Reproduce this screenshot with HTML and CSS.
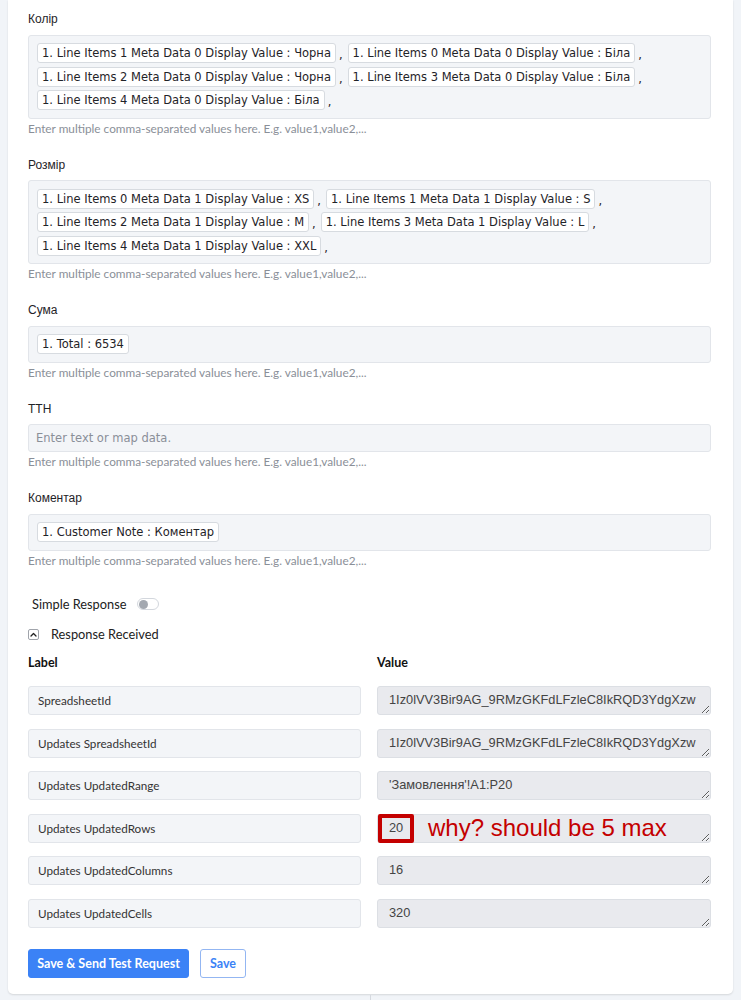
FILE: index.html
```html
<!DOCTYPE html>
<html lang="uk">
<head>
<meta charset="utf-8">
<title>Response Received</title>
<link rel="stylesheet" href="styles.css">
</head>
<body>
<div class="page">
  <div class="card">
    <div class="field">
      <div class="label">Колір</div>
      <div class="chips">
        <span class="chip-item"><span class="chip">1. Line Items 1 Meta Data 0 Display Value : Чорна</span><span class="comma">,</span></span>
        <span class="chip-item"><span class="chip">1. Line Items 0 Meta Data 0 Display Value : Біла</span><span class="comma">,</span></span>
        <span class="chip-item"><span class="chip">1. Line Items 2 Meta Data 0 Display Value : Чорна</span><span class="comma">,</span></span>
        <span class="chip-item"><span class="chip">1. Line Items 3 Meta Data 0 Display Value : Біла</span><span class="comma">,</span></span>
        <span class="chip-item"><span class="chip">1. Line Items 4 Meta Data 0 Display Value : Біла</span><span class="comma">,</span></span>
      </div>
      <div class="hint">Enter multiple comma-separated values here. E.g. value1,value2,...</div>
    </div>

    <div class="field">
      <div class="label">Розмір</div>
      <div class="chips">
        <span class="chip-item"><span class="chip">1. Line Items 0 Meta Data 1 Display Value : XS</span><span class="comma">,</span></span>
        <span class="chip-item"><span class="chip">1. Line Items 1 Meta Data 1 Display Value : S</span><span class="comma">,</span></span>
        <span class="chip-item"><span class="chip">1. Line Items 2 Meta Data 1 Display Value : M</span><span class="comma">,</span></span>
        <span class="chip-item"><span class="chip">1. Line Items 3 Meta Data 1 Display Value : L</span><span class="comma">,</span></span>
        <span class="chip-item"><span class="chip">1. Line Items 4 Meta Data 1 Display Value : XXL</span><span class="comma">,</span></span>
      </div>
      <div class="hint">Enter multiple comma-separated values here. E.g. value1,value2,...</div>
    </div>

    <div class="field">
      <div class="label">Сума</div>
      <div class="chips">
        <span class="chip-item"><span class="chip">1. Total : 6534</span></span>
      </div>
      <div class="hint">Enter multiple comma-separated values here. E.g. value1,value2,...</div>
    </div>

    <div class="field">
      <div class="label">TTH</div>
      <div class="text-input">Enter text or map data.</div>
      <div class="hint">Enter multiple comma-separated values here. E.g. value1,value2,...</div>
    </div>

    <div class="field">
      <div class="label">Коментар</div>
      <div class="chips">
        <span class="chip-item"><span class="chip">1. Customer Note : Коментар</span></span>
      </div>
      <div class="hint">Enter multiple comma-separated values here. E.g. value1,value2,...</div>
    </div>

    <div class="simple-row">
      <span>Simple Response</span>
      <span class="toggle"><span class="knob"></span></span>
    </div>

    <div class="received-row">
      <span class="chev-box">
        <svg width="7" height="5" viewBox="0 0 7 5"><path d="M1 4 L3.5 1.5 L6 4" fill="none" stroke="#222" stroke-width="1.3" stroke-linecap="round" stroke-linejoin="round"/></svg>
      </span>
      <span>Response Received</span>
    </div>

    <div class="resp-grid">
      <div class="col-head">Label</div>
      <div class="col-head">Value</div>

      <div class="resp-label">SpreadsheetId</div>
      <textarea class="resp-value" wrap="off" disabled>1Iz0lVV3Bir9AG_9RMzGKFdLFzleC8IkRQD3YdgXzw</textarea>

      <div class="resp-label">Updates SpreadsheetId</div>
      <textarea class="resp-value" wrap="off" disabled>1Iz0lVV3Bir9AG_9RMzGKFdLFzleC8IkRQD3YdgXzw</textarea>

      <div class="resp-label">Updates UpdatedRange</div>
      <textarea class="resp-value" wrap="off" disabled>'Замовлення'!A1:P20</textarea>

      <div class="resp-label">Updates UpdatedRows</div>
      <div class="value-wrap">
        <textarea class="resp-value" wrap="off" disabled>20</textarea>
        <span class="mark-box"></span>
        <span class="mark-text">why? should be 5 max</span>
      </div>

      <div class="resp-label">Updates UpdatedColumns</div>
      <textarea class="resp-value" wrap="off" disabled>16</textarea>

      <div class="resp-label">Updates UpdatedCells</div>
      <textarea class="resp-value" wrap="off" disabled>320</textarea>
    </div>

    <div class="actions">
      <button class="btn btn-primary">Save &amp; Send Test Request</button>
      <button class="btn btn-outline">Save</button>
    </div>
  </div>
  <div class="below"><div></div><div class="below-right"></div></div>
</div>
</body>
</html>
```

FILE: styles.css
```css
html, body {
  margin: 0;
  padding: 0;
  background: #f1f4f8;
}

.page {
  width: 741px;
  height: 1000px;
  overflow: hidden;
}

.card {
  margin: 0 8px;
  background: #ffffff;
  padding: 11px 22px 16px 20px;
  border-radius: 0 0 5px 5px;
  box-shadow: 0 1px 2px rgba(0, 0, 0, 0.12);
}

.field {
  margin-bottom: 21px;
}

.label {
  font-family: "Liberation Sans", Arial, sans-serif;
  font-size: 12px;
  line-height: 16px;
  color: #1f2328;
  margin-bottom: 7.5px;
}

.chips {
  display: flex;
  flex-wrap: wrap;
  column-gap: 5px;
  row-gap: 3.5px;
  background: #f3f5f8;
  border: 1px solid #e2e5ea;
  border-radius: 3px;
  padding: 7.5px 8px;
}

.chip-item {
  display: flex;
  align-items: flex-end;
}

.chip {
  font-family: "DejaVu Sans", Verdana, sans-serif;
  font-size: 11.5px;
  line-height: 18px;
  color: #1f2328;
  background: #ffffff;
  border: 1px solid #d7dbe0;
  border-radius: 3px;
  padding: 0 4px;
  white-space: nowrap;
}

.comma {
  font-family: "DejaVu Sans", Verdana, sans-serif;
  font-size: 11.5px;
  line-height: 16px;
  color: #1f2328;
  margin-left: 3px;
}

.text-input {
  font-family: "DejaVu Sans", Verdana, sans-serif;
  font-size: 11.5px;
  line-height: 26px;
  color: #8a8f98;
  background: #f3f5f8;
  border: 1px solid #e2e5ea;
  border-radius: 3px;
  padding: 0 7px;
}

.hint {
  font-family: Lato, "Open Sans", sans-serif;
  font-size: 11.8px;
  line-height: 14px;
  color: #8a8f98;
  margin-top: 3px;
}

.simple-row {
  display: flex;
  align-items: center;
  gap: 11px;
  margin-top: 28.5px;
  padding-left: 4px;
  font-family: Lato, "Open Sans", sans-serif;
  font-size: 12.8px;
  line-height: 16px;
  color: #222;
}

.toggle {
  width: 22px;
  height: 12px;
  box-sizing: border-box;
  border: 1px solid #d3d7dd;
  border-radius: 6px;
  background: #fff;
  display: flex;
  align-items: center;
  padding-left: 1px;
}

.knob {
  width: 9px;
  height: 9px;
  border-radius: 50%;
  background: #a3a8b0;
}

.received-row {
  display: flex;
  align-items: center;
  gap: 12px;
  margin-top: 14px;
  font-family: Lato, "Open Sans", sans-serif;
  font-size: 12.8px;
  line-height: 16px;
  color: #222;
}

.chev-box {
  width: 11px;
  height: 11px;
  box-sizing: border-box;
  border: 1px solid #a0a4ab;
  border-radius: 2px;
  display: flex;
  align-items: center;
  justify-content: center;
}

.resp-grid {
  display: grid;
  grid-template-columns: 333px 334px;
  column-gap: 16px;
  row-gap: 13.6px;
  margin-top: 13px;
}

.col-head {
  font-family: Lato, "Open Sans", sans-serif;
  font-size: 12.5px;
  font-weight: 700;
  line-height: 16px;
  color: #111;
  margin-bottom: 1.4px;
}

.resp-label {
  height: 29px;
  box-sizing: border-box;
  background: #f3f5f8;
  border: 1px solid #e2e5ea;
  border-radius: 3px;
  padding: 0 9px;
  font-family: Lato, "Open Sans", sans-serif;
  font-size: 11.7px;
  line-height: 27px;
  color: #333;
}

.value-wrap {
  position: relative;
  height: 29px;
}

.resp-value {
  display: block;
  width: 334px;
  height: 29px;
  box-sizing: border-box;
  margin: 0;
  background: #e9eaee;
  border: 1px solid #dcdfe4;
  border-radius: 3px;
  padding: 5px 11px;
  font-family: "Liberation Sans", Arial, sans-serif;
  font-size: 12.8px;
  line-height: 16px;
  color: #444;
  resize: vertical;
  overflow: hidden;
  white-space: pre;
  opacity: 1;
}

.mark-box {
  position: absolute;
  left: 1px;
  top: 0;
  width: 36px;
  height: 29px;
  box-sizing: border-box;
  border: 4px solid #c40000;
  border-radius: 2px;
}

.mark-text {
  position: absolute;
  left: 51px;
  top: 1px;
  font-family: "Liberation Sans", Arial, sans-serif;
  font-size: 24px;
  line-height: 26px;
  color: #c40000;
  white-space: nowrap;
}

.actions {
  display: flex;
  gap: 11px;
  margin-top: 21px;
}

.btn {
  height: 29px;
  box-sizing: border-box;
  border-radius: 3px;
  font-family: Lato, "Open Sans", sans-serif;
  font-size: 12.5px;
  font-weight: 700;
  padding: 0;
  white-space: nowrap;
  cursor: pointer;
}

.btn-primary {
  width: 161px;
  background: #3b82f6;
  border: 1px solid #3b82f6;
  color: #fff;
}

.btn-outline {
  width: 46px;
  background: #fff;
  border: 1px solid #93b6f2;
  color: #3b82f6;
}

.below {
  display: grid;
  grid-template-columns: 362px 1fr;
  height: 10px;
  margin: 1px 8px 0;
}

.below-right {
  border-left: 1px solid #d5d9df;
}
```
